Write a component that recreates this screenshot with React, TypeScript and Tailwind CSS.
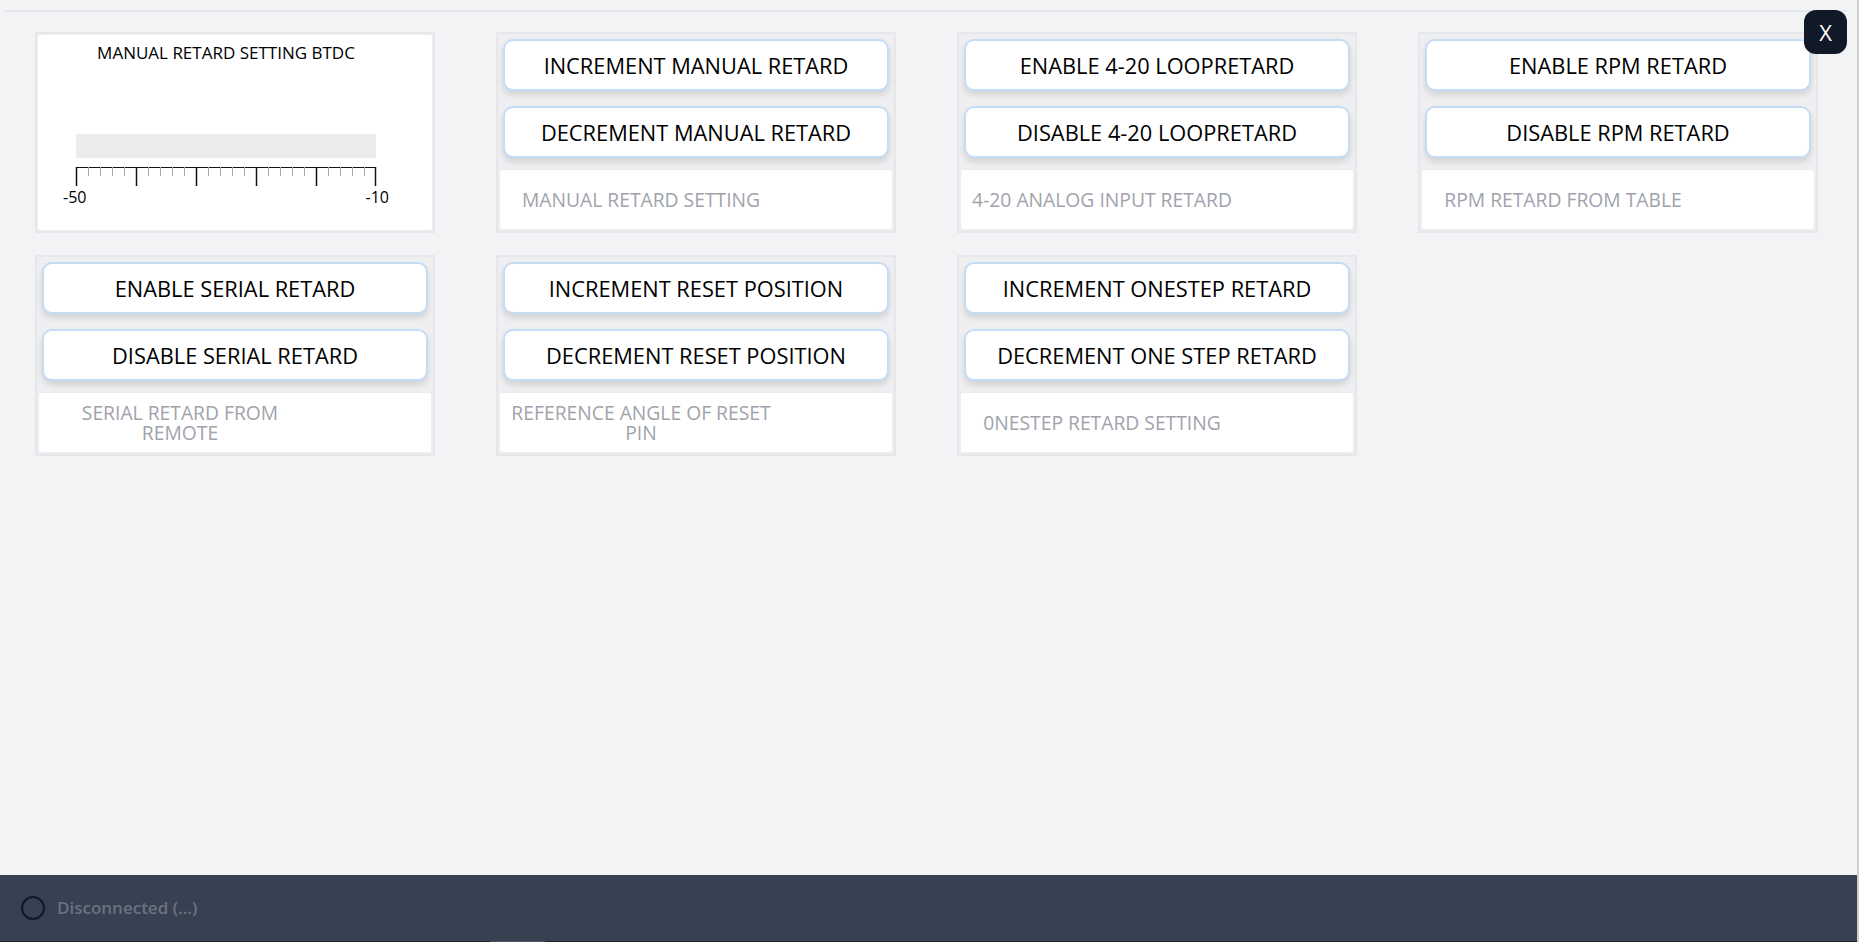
import { Fragment } from 'react';

type Control = {
  buttons: [string, string];
  reading: string;
};

const topRow: Control[] = [
  {
    buttons: ['INCREMENT MANUAL RETARD', 'DECREMENT MANUAL RETARD'],
    reading: 'MANUAL RETARD SETTING',
  },
  {
    buttons: ['ENABLE 4-20 LOOPRETARD', 'DISABLE 4-20 LOOPRETARD'],
    reading: '4-20 ANALOG INPUT RETARD',
  },
  {
    buttons: ['ENABLE RPM RETARD', 'DISABLE RPM RETARD'],
    reading: 'RPM RETARD FROM TABLE',
  },
];

const bottomRow: Control[] = [
  {
    buttons: ['ENABLE SERIAL RETARD', 'DISABLE SERIAL RETARD'],
    reading: 'SERIAL RETARD FROM REMOTE',
  },
  {
    buttons: ['INCREMENT RESET POSITION', 'DECREMENT RESET POSITION'],
    reading: 'REFERENCE ANGLE OF RESET PIN',
  },
  {
    buttons: ['INCREMENT ONESTEP RETARD', 'DECREMENT ONE STEP RETARD'],
    reading: '0NESTEP RETARD SETTING',
  },
];

const font = { fontFamily: '"Open Sans", "Noto Sans", sans-serif' };

function ControlCard({ control }: { control: Control }) {
  return (
    <div className="border-2 border-[#e5e7eb] bg-[#efeff1] p-[1px] flex flex-col">
      <div className="flex flex-col gap-[15px] mx-1 mt-1">
        {control.buttons.map((label) => (
          <button
            key={label}
            className="h-[52px] pt-[3px] rounded-[10px] border-2 border-[#c5dcf7] bg-white shadow-[0_4px_6px_rgba(0,0,0,0.12)] text-[21.8px] text-black"
          >
            {label}
          </button>
        ))}
      </div>
      <div className="mt-[11px] h-[61px] bg-white rounded-[3px] border border-[#ececee] flex items-center">
        <span className="ml-[6px] w-[270px] text-center text-[19.3px] leading-[20px] text-[#a0a3ab]">
          {control.reading}
        </span>
      </div>
    </div>
  );
}

function RetardGauge() {
  const ticks = Array.from({ length: 26 }, (_, i) => i);
  return (
    <div className="border-2 border-[#e5e7eb] bg-[#efeff1] p-[1px]">
      <div className="h-full bg-white rounded-[3px] flex flex-col">
        <div className="ml-[38px] w-[300px] flex flex-col">
          <div className="mt-[6px] text-center text-[17px] leading-[24px] text-black whitespace-nowrap">
            MANUAL RETARD SETTING BTDC
          </div>
          <div className="mt-[69px] h-[24px] bg-[#ececec]" />
          <svg width="300" height="21" className="mt-[9px] overflow-visible">
            <line x1="0" y1="0.5" x2="300" y2="0.5" stroke="#111" strokeWidth="1" />
            {ticks.map((i) => {
              const x = Math.min(i * 12 + 0.5, 299.5);
              const major = i % 5 === 0;
              return (
                <line
                  key={i}
                  x1={x}
                  y1={0}
                  x2={x}
                  y2={major ? 19 : 9}
                  stroke={major ? '#111' : '#a8a8a8'}
                  strokeWidth={major ? 1.5 : 1}
                />
              );
            })}
          </svg>
          <div className="-mx-[13px] -mt-[1px] flex justify-between text-[16px] leading-[20px] text-black">
            <span>-50</span>
            <span>-10</span>
          </div>
        </div>
      </div>
    </div>
  );
}

export default function App() {
  return (
    <div
      className="relative h-[942px] w-full flex flex-col bg-[#f2f3f5] border-r-2 border-[#cdcdcf] overflow-hidden"
      style={font}
    >
      <main className="flex-1 pt-[10px] pl-[5px] pr-[10px]">
        <div className="border-t-2 border-[#e5e7eb] pt-[20px] pl-[30px]">
          <div className="grid grid-cols-[400px_400px_400px_400px] gap-x-[61px] gap-y-[22px]">
            <RetardGauge />
            {topRow.map((c) => (
              <ControlCard key={c.reading} control={c} />
            ))}
            {bottomRow.map((c) => (
              <Fragment key={c.reading}>
                <ControlCard control={c} />
              </Fragment>
            ))}
          </div>
        </div>
      </main>

      <button className="absolute top-[10px] right-[10px] w-[43px] h-[44px] rounded-[12px] bg-[#111827] text-white text-[22px] leading-none">
        X
      </button>

      <footer className="h-[67px] bg-[#374151] flex flex-col">
        <div className="flex-1 flex items-center pl-[21px]">
          <span className="w-[24px] h-[24px] rounded-full border-2 border-[#111827]" />
          <span className="ml-[12px] text-[17px] font-semibold text-[#6b7280]">
            Disconnected (...)
          </span>
        </div>
        <div className="h-[1px] flex bg-[#1f2430]">
          <div className="ml-[490px] w-[55px] bg-[#4b5563]" />
        </div>
      </footer>
    </div>
  );
}
